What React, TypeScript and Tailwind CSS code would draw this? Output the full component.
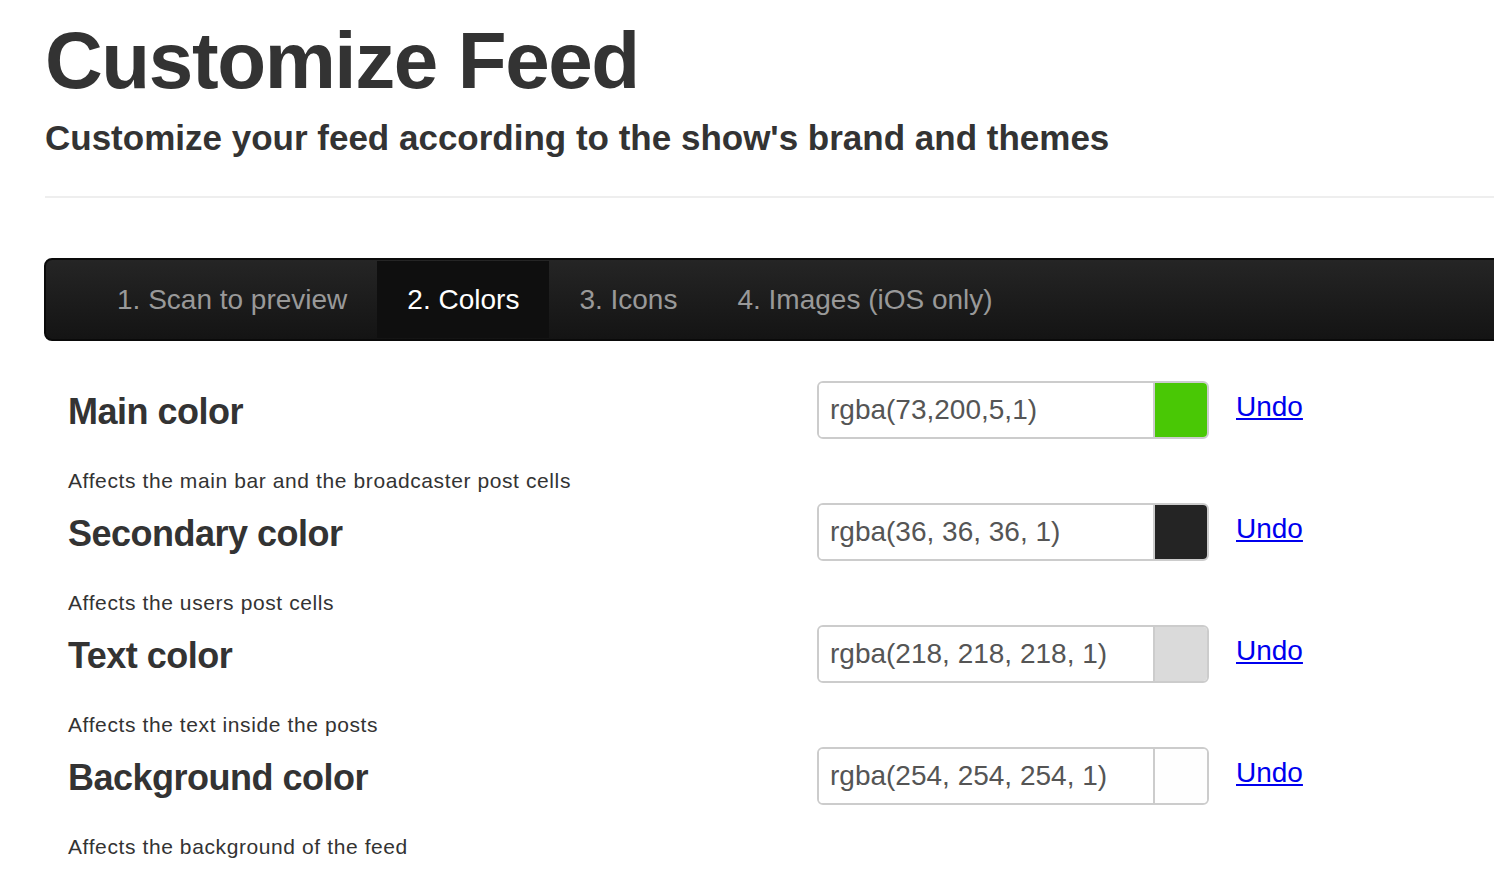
const rows = [
  { label: "Main color", value: "rgba(73,200,5,1)", swatch: "bg-[#49c805]", desc: "Affects the main bar and the broadcaster post cells" },
  { label: "Secondary color", value: "rgba(36, 36, 36, 1)", swatch: "bg-[#242424]", desc: "Affects the users post cells" },
  { label: "Text color", value: "rgba(218, 218, 218, 1)", swatch: "bg-[#dadada]", desc: "Affects the text inside the posts" },
  { label: "Background color", value: "rgba(254, 254, 254, 1)", swatch: "bg-[#fefefe]", desc: "Affects the background of the feed" },
]

const tabs = ["1. Scan to preview", "2. Colors", "3. Icons", "4. Images (iOS only)"]

export default function App() {
  return (
    <div className="w-full min-h-[892px] overflow-hidden bg-white font-['Liberation_Sans',Arial,sans-serif] text-[#333]">
      <div className="w-[1560px] pl-[45px]">
        <h1 className="mt-[17px] text-[80px] leading-[88px] font-bold tracking-[-1.4px]">Customize Feed</h1>
        <h2 className="mt-[13px] text-[35px] leading-[40px] font-bold">
          Customize your feed according to the show's brand and themes
        </h2>
        <div className="mt-[38px] h-[2px] bg-[#eeeeee]" />

        <div className="mt-[60px] -ml-px h-[83px] rounded-l-[8px] border-2 border-[#0a0a0a] bg-gradient-to-b from-[#252525] to-[#141414] pl-[41px] flex items-stretch">
          {tabs.map((t, i) => (
            <div
              key={t}
              className={
                i === 1
                  ? "my-px flex items-center px-[30px] text-[28px] bg-[#0f0f0f] text-white"
                  : "my-px flex items-center px-[30px] text-[28px] text-[#999999]"
              }
            >
              {t}
            </div>
          ))}
        </div>

        <div className="mt-[40px] pl-[23px]">
          {rows.map((r) => (
            <div key={r.label}>
              <div className="flex items-center h-[58px]">
                <h3 className="w-[749px] text-[36px] leading-[40px] font-bold tracking-[-0.5px] pt-[3px]">{r.label}</h3>
                <div className="flex h-[58px] w-[392px] rounded-[6px] border-2 border-[#cccccc] overflow-hidden">
                  <div className="flex-1 flex items-center pl-[11px] text-[28px] text-[#555555] bg-white">{r.value}</div>
                  <div className={"w-[54px] border-l-2 border-[#cccccc] " + r.swatch} />
                </div>
                <a href="#" className="ml-[27px] -mt-[6px] text-[28px] text-[#0000ee] underline">
                  Undo
                </a>
              </div>
              <p className="mt-[27px] mb-[7px] h-[30px] text-[21px] leading-[30px] tracking-[0.6px]">{r.desc}</p>
            </div>
          ))}
        </div>
      </div>
    </div>
  )
}
